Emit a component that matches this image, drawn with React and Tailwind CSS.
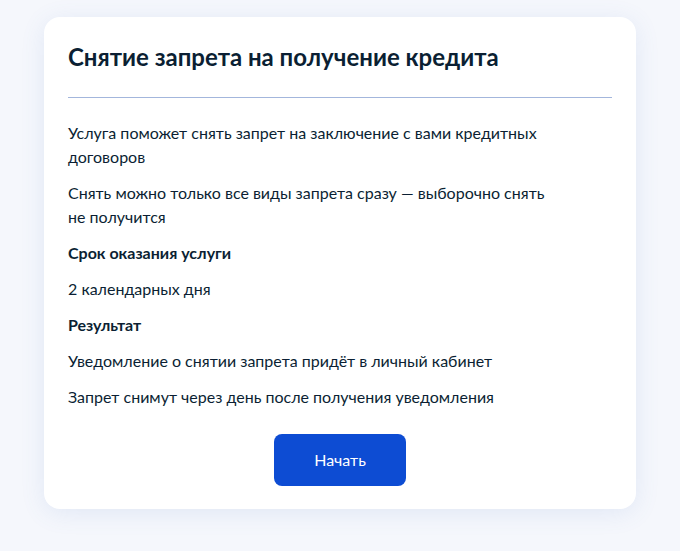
import React from "react";

export default function App() {
  const font = { fontFamily: "Lato, 'Noto Sans', sans-serif" };

  return (
    <div className="min-h-screen bg-[#f5f7fc] px-[44px] pt-[17px] pb-10" style={font}>
      <div className="w-[592px] bg-white rounded-2xl shadow-[0_4px_24px_rgba(86,125,200,0.12)] px-6 pt-6 pb-[23px] text-[#0b1f33]">
        <h1 className="text-[24px] leading-8 font-bold">Снятие запрета на получение кредита</h1>
        <div className="mt-6 mb-[23px] h-px bg-[#a3b6dc]" />

        <div className="flex flex-col gap-3 text-base leading-6">
          <p className="max-w-[480px]">Услуга поможет снять запрет на заключение с вами кредитных договоров</p>
          <p className="max-w-[480px]">Снять можно только все виды запрета сразу — выборочно снять не получится</p>
          <p className="font-bold">Срок оказания услуги</p>
          <p>2 календарных дня</p>
          <p className="font-bold">Результат</p>
          <p>Уведомление о снятии запрета придёт в личный кабинет</p>
          <p>Запрет снимут через день после получения уведомления</p>
        </div>

        <div className="flex justify-center mt-[25px]">
          <button className="w-[132px] h-[52px] rounded-lg bg-[#0d4cd3] text-white text-base">
            Начать
          </button>
        </div>
      </div>
    </div>
  );
}
